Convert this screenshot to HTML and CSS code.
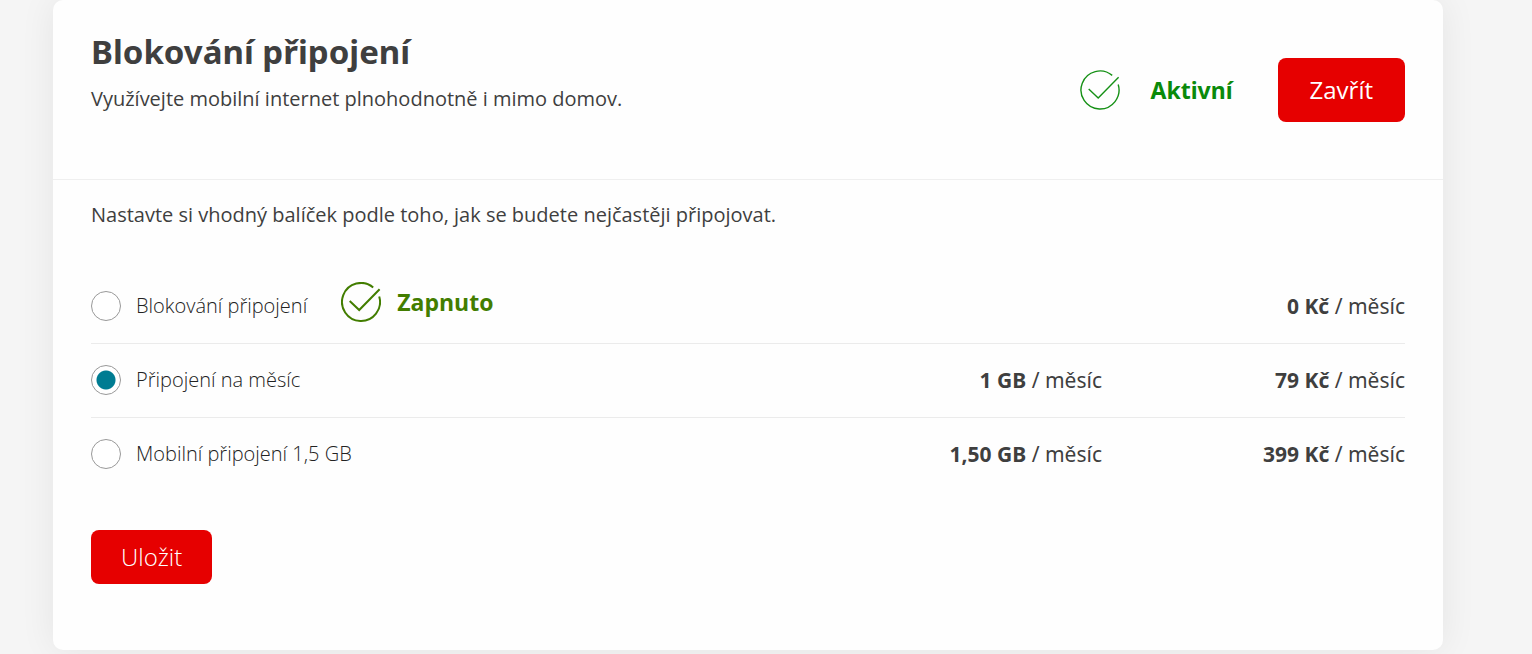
FILE: index.html
```html
<!DOCTYPE html>
<html lang="cs">
<head>
<meta charset="utf-8">
<meta name="viewport" content="width=device-width, initial-scale=1">
<title>Blokování připojení</title>
<link rel="stylesheet" href="styles.css">
</head>
<body>
<main class="card">
  <header class="card-header">
    <div class="intro">
      <h1 class="title">Blokování připojení</h1>
      <p class="lead">Využívejte mobilní internet plnohodnotně i mimo domov.</p>
    </div>
    <div class="status">
      <svg class="tick tick-thin" viewBox="0 0 40 40" aria-hidden="true"><path d="M32.2 5.4A19 19 0 1 0 38.2 14.5"/><path d="M8.7 19 18.2 28 38.6 7.2"/></svg>
      <strong class="status-text">Aktivní</strong>
      <button type="button" class="button button-close">Zavřít</button>
    </div>
  </header>
  <form class="card-body">
    <p class="hint">Nastavte si vhodný balíček podle toho, jak se budete nejčastěji připojovat.</p>
    <table class="plans">
      <tbody>
        <tr>
          <td class="plan"><div class="choice">
            <input class="radio" type="radio" name="plan" id="plan-block"><label for="plan-block">Blokování připojení</label>
            <span class="active-badge">
              <svg class="tick" viewBox="0 0 40 40" aria-hidden="true"><path d="M32.2 5.4A19 19 0 1 0 38.2 14.5"/><path d="M8.7 19 18.2 28 38.6 7.2"/></svg>
              <strong>Zapnuto</strong>
            </span>
          </div></td>
          <td class="quota"></td>
          <td class="price"><strong>0 Kč</strong> / měsíc</td>
        </tr>
        <tr>
          <td class="plan"><div class="choice"><input class="radio" type="radio" name="plan" id="plan-month" checked><label for="plan-month">Připojení na měsíc</label></div></td>
          <td class="quota"><strong>1 GB</strong> / měsíc</td>
          <td class="price"><strong>79 Kč</strong> / měsíc</td>
        </tr>
        <tr>
          <td class="plan"><div class="choice"><input class="radio" type="radio" name="plan" id="plan-mobile"><label for="plan-mobile">Mobilní připojení 1,5 GB</label></div></td>
          <td class="quota"><strong>1,50 GB</strong> / měsíc</td>
          <td class="price"><strong>399 Kč</strong> / měsíc</td>
        </tr>
      </tbody>
    </table>
    <button type="button" class="button button-save">Uložit</button>
  </form>
</main>
</body>
</html>
```
FILE: styles.css
```css
* { box-sizing: border-box; }

body {
  margin: 0;
  padding: 0 89px 4px 53px;
  background: #f5f5f5;
  color: #3f3f3f;
  font-family: "Noto Sans", "Open Sans", sans-serif;
  font-size: 21px;
  line-height: 28px;
}

h1, p { margin: 0; }

.card {
  background: #fefefe;
  border-radius: 10px;
  box-shadow: 0 0 36px rgba(0, 0, 0, 0.07);
}

.card-header {
  display: flex;
  justify-content: space-between;
  align-items: center;
  padding: 0 38px;
  border-bottom: 1px solid #efefef;
}

.intro { padding: 32px 0 66px; }

.title {
  font-size: 33px;
  line-height: 40px;
  margin-bottom: 13px;
}

.lead, .hint {
  font-family: "Open Sans", sans-serif;
  font-size: 20px;
}

.status {
  display: flex;
  align-items: center;
}

.status-text {
  margin: 0 45px 0 31px;
  color: #0a8a0a;
  font-size: 23px;
}

.tick {
  width: 40px;
  height: 40px;
  fill: none;
  stroke: #427d00;
  stroke-width: 2;
}

.tick-thin {
  stroke: #159015;
  stroke-width: 1.4;
}

.button {
  border: 0;
  border-radius: 8px;
  background: #e60000;
  color: #fff;
  font-family: "Open Sans", sans-serif;
  font-size: 24px;
  line-height: 32px;
}

.button-close { padding: 16px 32px; }

.button-save {
  margin-top: 39px;
  padding: 11px 30px;
  font-weight: 300;
}

.card-body { padding: 21px 38px 66px; }

.plans {
  width: 100%;
  margin-top: 40px;
  border-collapse: collapse;
  table-layout: fixed;
}

.plans td {
  height: 74px;
  padding: 0;
}

.plans tr + tr td { border-top: 1px solid #ebebeb; }

.quota, .price {
  width: 303px;
  text-align: right;
}

.choice {
  display: flex;
  align-items: center;
  font-family: "Open Sans", sans-serif;
  font-size: 20px;
  font-weight: 300;
}

.choice label { color: #222; }

.radio {
  appearance: none;
  width: 30px;
  height: 30px;
  margin: 0 15px 0 0;
  border: 1px solid #999;
  border-radius: 50%;
  background: #fff;
}

.radio:checked { background: radial-gradient(circle, #007c92 9px, #fff 10px); }

.active-badge {
  display: flex;
  align-items: center;
  gap: 16px;
  margin-left: 34px;
  padding-bottom: 8px;
  color: #427d00;
  font-size: 23px;
  font-weight: 700;
}

.active-badge strong { font-weight: inherit; }
```
